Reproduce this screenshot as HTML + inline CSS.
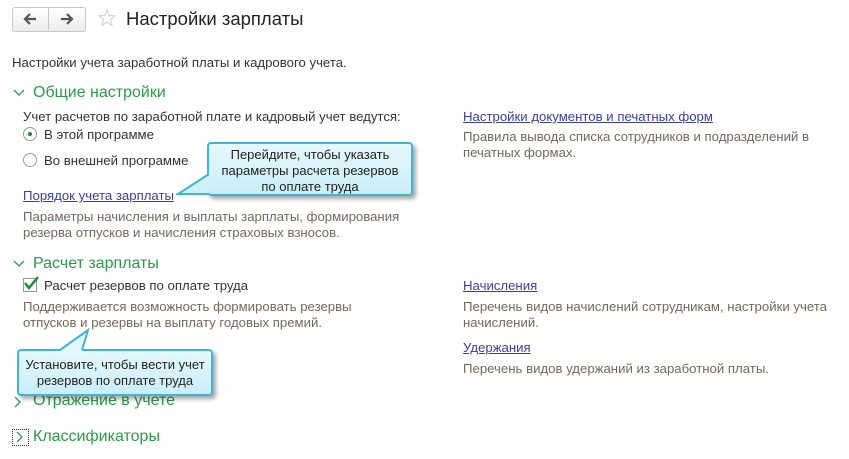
<!DOCTYPE html>
<html><head><meta charset="utf-8"><style>
body{margin:0;width:849px;height:459px;background:#fff;font-family:"Liberation Sans",Arial,sans-serif;position:relative;overflow:hidden;color:#333}
.a{position:absolute;white-space:nowrap;font-size:13.2px;line-height:15px}
.g{color:#706a5e}
.h{color:#2a9a48;font-size:16px;line-height:18px}
.l{color:#3b3f9e;text-decoration:underline}
.call{position:absolute;background:linear-gradient(#e6f8fd,#c9eef9);border:2px solid #3fb4d3;border-radius:4px;box-shadow:3px 3px 4px rgba(0,0,0,.35);text-align:center;font-size:13px;line-height:16px;color:#222}
</style></head><body>
<div style="position:absolute;left:12px;top:7px;width:72px;height:23px;border:1px solid #c8c8c8;border-radius:3px;background:linear-gradient(#fff,#ececec)"></div>
<div style="position:absolute;left:48px;top:8px;width:1px;height:22px;background:#c8c8c8"></div>
<svg style="position:absolute;left:22px;top:12px" width="16" height="14"><path d="M14,7 H4 M8,2 L3,7 L8,12" fill="none" stroke="#555" stroke-width="2.2"/></svg>
<svg style="position:absolute;left:59px;top:12px" width="16" height="14"><path d="M2,7 H12 M8,2 L13,7 L8,12" fill="none" stroke="#555" stroke-width="2.2"/></svg>
<svg style="position:absolute;left:97px;top:8px" width="20" height="20"><polygon points="10,2 12.3,7.5 18,7.8 13.6,11.5 15,17.3 10,14.2 5,17.3 6.4,11.5 2,7.8 7.7,7.5" fill="none" stroke="#ccc"/></svg>
<div class="a" style="left:126px;top:8px;font-size:18.5px;line-height:22px;color:#222">Настройки зарплаты</div>
<div class="a" style="left:12px;top:55px">Настройки учета заработной платы и кадрового учета.</div>
<svg style="position:absolute;left:13px;top:88px" width="12" height="10"><path d="M1,2 L6,7 L11,2" fill="none" stroke="#2a9a48" stroke-width="1.3"/></svg>
<div class="a h" style="left:33px;top:84px">Общие настройки</div>
<div class="a" style="left:23px;top:109px">Учет расчетов по заработной плате и кадровый учет ведутся:</div>
<div style="position:absolute;left:23px;top:127px;width:12px;height:12px;border:1px solid #999;border-radius:50%;background:#fff"></div>
<div style="position:absolute;left:28px;top:132px;width:4px;height:4px;border-radius:50%;background:#1a8a3a"></div>
<div class="a" style="left:44px;top:127px">В этой программе</div>
<div style="position:absolute;left:23px;top:153px;width:12px;height:12px;border:1px solid #999;border-radius:50%;background:#fff"></div>
<div class="a" style="left:44px;top:153px">Во внешней программе</div>
<div class="a l" style="left:23px;top:188px">Порядок учета зарплаты</div>
<div class="a g" style="left:23px;top:209px">Параметры начисления и выплаты зарплаты, формирования</div>
<div class="a g" style="left:23px;top:225px">резерва отпусков и начисления страховых взносов.</div>
<svg style="position:absolute;left:13px;top:259px" width="12" height="10"><path d="M1,2 L6,7 L11,2" fill="none" stroke="#2a9a48" stroke-width="1.3"/></svg>
<div class="a h" style="left:33px;top:255px">Расчет зарплаты</div>
<div style="position:absolute;left:23px;top:278px;width:12px;height:12px;border:1px solid #999;background:#fff"></div>
<svg style="position:absolute;left:22px;top:274px" width="18" height="18"><path d="M3,9 L7,14 L16,3" fill="none" stroke="#1a8a3a" stroke-width="2.5"/></svg>
<div class="a" style="left:44px;top:278px">Расчет резервов по оплате труда</div>
<div class="a g" style="left:23px;top:299px">Поддерживается возможность формировать резервы</div>
<div class="a g" style="left:23px;top:315px">отпусков и резервы на выплату годовых премий.</div>
<svg style="position:absolute;left:13px;top:396px" width="10" height="12"><path d="M2,1 L7,6 L2,11" fill="none" stroke="#2a9a48" stroke-width="1.3"/></svg>
<div class="a h" style="left:33px;top:392px">Отражение в учете</div>
<div style="position:absolute;left:12px;top:429px;width:15px;height:15px;border:1px dotted #333"></div>
<svg style="position:absolute;left:15px;top:431px" width="10" height="12"><path d="M2,1 L7,6 L2,11" fill="none" stroke="#2a9a48" stroke-width="1.3"/></svg>
<div class="a h" style="left:33px;top:428px">Классификаторы</div>
<div class="a l" style="left:463px;top:109px">Настройки документов и печатных форм</div>
<div class="a g" style="left:463px;top:129px">Правила вывода списка сотрудников и подразделений в</div>
<div class="a g" style="left:463px;top:145px">печатных формах.</div>
<div class="a l" style="left:463px;top:278px">Начисления</div>
<div class="a g" style="left:463px;top:299px">Перечень видов начислений сотрудникам, настройки учета</div>
<div class="a g" style="left:463px;top:315px">начислений.</div>
<div class="a l" style="left:463px;top:340px">Удержания</div>
<div class="a g" style="left:463px;top:361px">Перечень видов удержаний из заработной платы.</div>
<div class="call" style="left:207px;top:142px;width:206px;height:54px;padding-top:3px;box-sizing:border-box">Перейдите, чтобы указать<br>параметры расчета резервов<br>по оплате труда</div>
<svg style="position:absolute;left:176px;top:168px" width="36" height="30"><polygon points="2,26 33,6 33,26" fill="#d0f0fa"/><polyline points="33,6 2,26 33,26" fill="none" stroke="#3fb4d3" stroke-width="2"/></svg>
<div class="call" style="left:17px;top:349px;width:196px;height:47px;padding-top:6px;box-sizing:border-box">Установите, чтобы вести учет<br>резервов по оплате труда</div>
<svg style="position:absolute;left:58px;top:328px" width="36" height="24"><polygon points="2,23 30,2 24,23" fill="#e6f8fd"/><polyline points="2,22 30,2 24,22" fill="none" stroke="#3fb4d3" stroke-width="2"/></svg>
</body></html>
